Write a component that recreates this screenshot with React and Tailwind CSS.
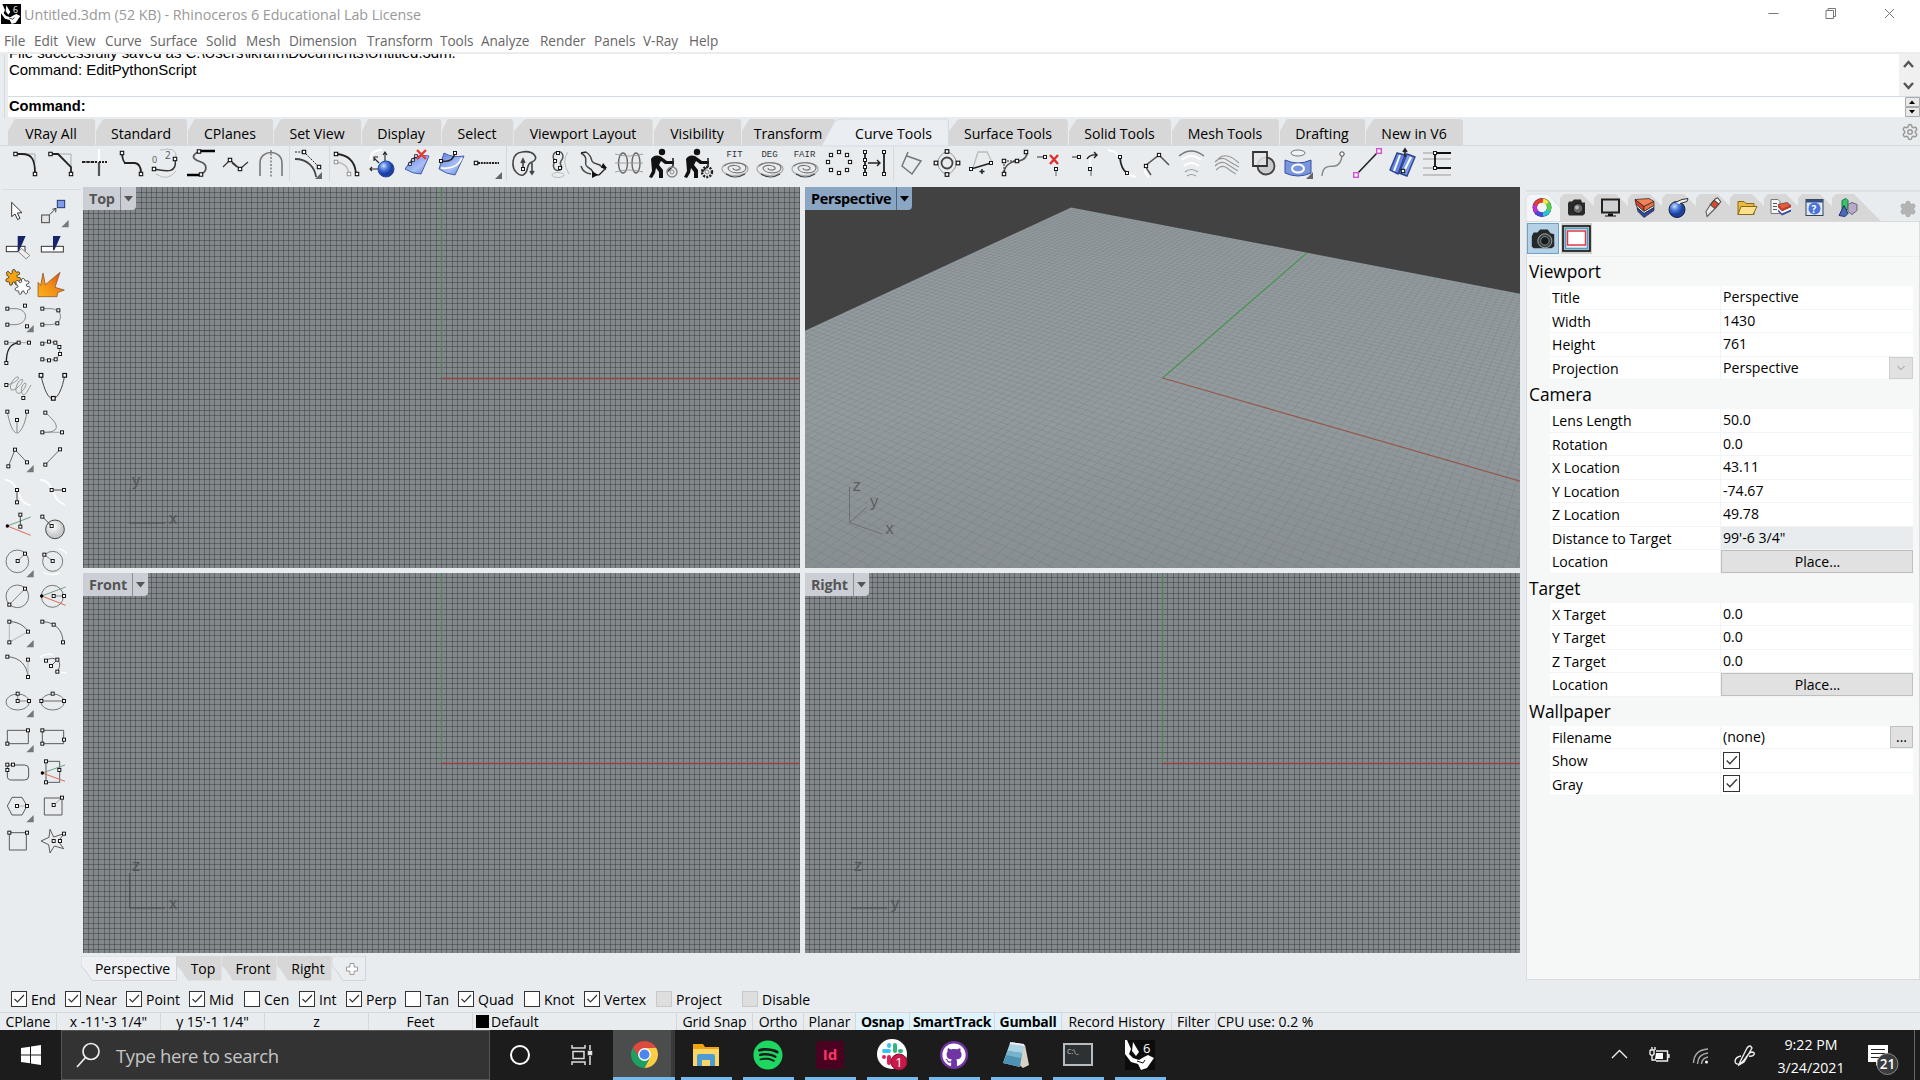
import React from "react";
import { FaSpotify, FaGithub } from "react-icons/fa";
import { Settings } from "lucide-react";

const FONT = "font-['Open_Sans','Noto_Sans',sans-serif]";

/* ---------- small drawing helpers ---------- */
const Sq = ({ p, s = 3.4, c = "#111" }) =>
  p.map(([x, y], i) => (
    <rect key={i} x={x - s / 2} y={y - s / 2} width={s} height={s} fill="#fff" stroke={c} strokeWidth={s * 0.32} />
  ));
const L = ({ d, c = "#222", w = 1.4, f = "none", dash }) => (
  <path d={d} stroke={c} strokeWidth={w} fill={f} strokeDasharray={dash} />
);
const Fly = () => <path d="M79 100H101V78Z" fill="#777" />;
const Fly2 = () => <path d="M25 33H32V26Z" fill="#666" />;
const Q = (props) => <Sq s={9} {...props} />;
const G = (props) => <L c="#777" w={2.6} {...props} />;

const Axes = ({ x = 22, y = 51, g = "92 24", r = "92 79" }) => (
  <>
    <L d={`M${x} ${y}L${g}`} c="#6fa083" w={3} />
    <L d={`M${x} ${y}L${r}`} c="#dc6a56" w={3} />
    <circle cx={x} cy={y} r="5" />
  </>
);

const Puzzle = ({ x, y, f }) => (
  <g transform={`translate(${x} ${y}) rotate(-12)`} stroke="#333" strokeWidth="2.6" fill={f}>
    <path d="M-15-13C-21-19-9-25-7-15C-5-11 0-11 1-15C0-25 12-25 11-16C12-13 15-12 16-13C24-14 24-3 17-4C12-5 11 0 14 4C24 3 25 14 16 14C13 14 11 16 12 19C12 26 2 26 2 19C3 13-3 12-5 16C-6 25-17 23-14 15C-13 12-14 10-17 10C-25 10-25 0-17 0C-12 0-11-5-15-8C-18-9-18-12-15-13Z" />
  </g>
);

const LEFT = [
  <path d="M35 25V68L45 60 53 77 60 73 52 57 66 56Z" fill="#fff" stroke="#333" strokeWidth="3" />,
  <><rect x="20" y="63" width="23" height="23" fill="#e4e4e0" stroke="#444" strokeWidth="3" /><rect x="67" y="19" width="22" height="22" fill="#7f9bee" stroke="#27386b" strokeWidth="3" /><L d="M44 62L62 44M52 46L63 43 62 55" w={2.5} /><Fly /></>,
  <><rect x="19" y="52" width="56" height="16" fill="#fff" stroke="#333" strokeWidth="3" /><path d="M64 58L89 79 79 90 55 68Z" fill="#eee" stroke="#888" strokeWidth="3" /><path d="M53 21H77L58 64 53 69Z" fill="#17246b" /></>,
  <><rect x="19" y="52" width="66" height="17" fill="#fff" stroke="#333" strokeWidth="3" /><path d="M54 21H77L58 64 54 64Z" fill="#17246b" /></>,
  <><Puzzle x={39} y={40} f="#f7a20f" /><Puzzle x={67} y={67} f="#fff" /></>,
  <path d="M9 98V55L17 64 24 27 31 62 75 25 60 70 88 78 68 86 66 98Z" fill="url(#fire)" stroke="#7a4a1c" strokeWidth="2" />,
  <><G d="M22 29H48C86 31 86 73 48 77H22" /><Q p={[[22, 29], [22, 77], [75, 20], [81, 82]]} /><Fly /></>,
  <><G d="M22 29H48C86 31 86 73 48 77H22" /><Q p={[[22, 29], [70, 34], [67, 73], [22, 77]]} /></>,
  <><G d="M19 26H87" c="#999" /><L d="M19 87C19 50 28 30 56 26" w={4} /><Q p={[[19, 26], [56, 26], [87, 26], [19, 87]]} /></>,
  <><G d="M22 29L42 23 61 26 73 39 75 60 62 76 42 79 22 76" /><Q p={[[22, 29], [42, 23], [61, 26], [73, 39], [75, 60], [62, 76], [42, 79], [22, 76]]} /></>,
  <><G d="M19 48C40 45 60 30 55 24C45 20 25 50 33 62C45 70 75 35 67 31C55 30 40 65 52 72C62 80 85 45 76 42C66 42 58 72 70 77C78 80 88 55 93 48" c="#888" /><Q p={[[19, 48], [70, 87]]} /></>,
  <><L d="M18 19C28 65 40 89 54 89C68 89 82 60 89 19" w={3} c="#444" /><Sq s={11} p={[[18, 19], [89, 19], [55, 88]]} /></>,
  <><G d="M22 23C30 70 42 87 51 87C60 87 75 65 81 23M51 48V85" /><Q p={[[22, 23], [81, 23], [51, 48]]} /></>,
  <><G d="M22 85H81" c="#999" /><G d="M31 26C50 42 65 58 64 70C62 83 45 85 22 85" /><Q p={[[31, 26], [22, 85], [81, 85]]} /></>,
  <><G d="M25 82L45 32 81 70" c="#555" /><Q p={[[25, 82], [45, 32], [81, 70]]} /><Fly /></>,
  <><G d="M75 31L31 77" c="#555" /><Q p={[[75, 31], [31, 77]]} /></>,
  <><L d="M14 17C62 22 45 85 92 94" c="#fff" w={5} /><G d="M51 48V85" c="#333" /><Q p={[[51, 48], [51, 85]]} /></>,
  <><L d="M16 17C62 22 45 80 90 92" c="#fff" w={5} /><G d="M50 48H87" c="#333" /><Q p={[[50, 48], [87, 48]]} /></>,
  <><Axes /><G d="M61 17V53" c="#333" /><Q p={[[61, 17], [61, 53]]} /></>,
  <><circle cx="60" cy="61" r="28" fill="url(#ball)" stroke="#444" strokeWidth="3" /><G d="M22 23L50 51" c="#333" /><Q p={[[22, 23], [50, 51]]} /></>,
  <><circle cx="52" cy="52" r="34" fill="none" stroke="#777" strokeWidth="3" /><G d="M53 51L75 29" /><Q p={[[53, 51], [75, 29]]} /><Fly /></>,
  <><L d="M25 85Q50 98 75 86M72 14Q90 20 95 30" c="#fff" w={4} /><circle cx="53" cy="52" r="30" fill="none" stroke="#777" strokeWidth="3" /><G d="M53 51L28 32" /><Q p={[[53, 51], [28, 32]]} /></>,
  <><circle cx="52" cy="52" r="34" fill="none" stroke="#777" strokeWidth="3" /><G d="M28 77L75 29" /><Q p={[[28, 77], [75, 29]]} /></>,
  <><circle cx="52" cy="52" r="33" fill="none" stroke="#777" strokeWidth="3" /><Axes x={20} /><G d="M56 51H87" /><Q p={[[56, 51], [87, 51]]} /></>,
  <><G d="M28 23V85L84 53" c="#aaa" /><G d="M28 23C50 22 75 35 84 53" c="#444" /><Q p={[[28, 23], [28, 85], [84, 53]]} /><Fly /></>,
  <><G d="M22 23C62 24 84 50 84 85" c="#555" /><Q p={[[22, 23], [56, 32], [84, 85]]} /></>,
  <><G d="M22 23C60 25 82 50 84 84" c="#555" /><G d="M84 32V84" c="#aaa" /><Q p={[[22, 23], [84, 32], [84, 84]]} /></>,
  <><L d="M15 25Q35 10 55 18M78 70Q95 70 92 75" c="#fff" w={4} /><G d="M33 35C50 20 90 30 67 68M48 51L67 32" c="#444" /><Q p={[[33, 35], [67, 32], [48, 51], [67, 68]]} /></>,
  <><ellipse cx="53" cy="54" rx="35" ry="24" fill="none" stroke="#777" strokeWidth="3" /><G d="M53 29V51H87" /><Q p={[[53, 29], [53, 51], [87, 51]]} /><Fly /></>,
  <><ellipse cx="53" cy="54" rx="35" ry="24" fill="none" stroke="#777" strokeWidth="3" /><G d="M19 51H87" c="#555" /><Q p={[[53, 29], [19, 51], [87, 51]]} /></>,
  <><G d="M22 34H85V74H22Z" c="#444" /><Q p={[[84, 34], [22, 74]]} /><Fly /></>,
  <><G d="M22 34H86V74H22Z" c="#444" /><Q p={[[22, 34], [22, 74], [87, 62]]} /></>,
  <><rect x="22" y="33" width="64" height="45" rx="12" fill="none" stroke="#555" strokeWidth="3" /><Q p={[[22, 32], [39, 32], [22, 48]]} /></>,
  <><G d="M33 22H74V85H33Z" c="#444" /><Axes y={57} g="90 33" r="90 82" /><Q p={[[33, 22], [73, 48], [33, 85]]} /></>,
  <><G d="M22 51L36 25H66L81 51 66 78H36Z" c="#444" /><G d="M51 51H81" c="#aaa" /><Q p={[[51, 51], [81, 51]]} /><Fly /></>,
  <><G d="M28 27H81V78H28Z" c="#444" /><G d="M56 48L81 26" c="#999" /><Q p={[[81, 26], [56, 48]]} /></>,
  <><G d="M28 26H79V78H28Z" c="#444" /><Q p={[[28, 26], [81, 26]]} /></>,
  <><G d="M45 16L56 39 87 29 70 52 86 74 58 66 45 87 41 62 18 51 42 40Z" c="#444" /><Q p={[[87, 29], [56, 51], [75, 51]]} /></>,
];

const Spiral = ({ t }) => (
  <>
    <text x="17.5" y="11" fontSize="9" textAnchor="middle" fill="#333" className="font-['Liberation_Mono',monospace]">{t}</text>
    <g fill="none" stroke="#777" strokeWidth="1.2">
      <ellipse cx="18" cy="23" rx="13" ry="6.5" stroke="#aaa" />
      <path d="M7 20C13 15 29 16 29 22C28 29 12 28 11 22C13 18 24 19 23 23C20 25 16 24 16 22" />
      <path d="M9 28Q18 34 28 28" stroke="#444" />
    </g>
  </>
);
const Digger = ({ k }) => (
  <>
    <circle cx="15" cy="6" r="3.2" fill="#111" />
    <path d="M4 13Q7 8 13 10L20 15 27 15 27 18 18 18 14 15 12 19 16 24 16 32H12L12 26 9 22 8 27 5 32 2 31 5 25Z" fill="#111" />
    <L d="M26 12V20L20 26" w={1.6} />
    <circle cx="25" cy="26" r="5" fill="none" stroke={k ? "#222" : "#888"} strokeWidth={k ? 2.4 : 1.5} strokeDasharray={k ? "2 1.2" : undefined} />
    <circle cx="25" cy="26" r="2" fill="none" stroke="#888" />
  </>
);

const TOP_ICONS = [
  <><L d="M14 8H27V16" c="#aaa" w={1} /><L d="M8 8H14C24 8 27 14 27 27" w={1.8} /><Sq p={[[7.5, 8], [27, 28]]} /></>,
  <><L d="M14 8H28V20" c="#aaa" w={1} /><L d="M7 8H15L28 21V27" w={1.8} /><Sq p={[[7.5, 8], [28, 28]]} /></>,
  <><L d="M21 3V15" c="#fff" w={2} /><L d="M21 16V30" w={2.2} c="#555" /><L d="M4 16H19" w={1.8} dash="3.5 .8" /><L d="M21 16H30" w={1.8} dash="2 1" /></>,
  <><L d="M13 17Q10 17 9 8M11 17H22Q28 18 28 27" w={1.8} /><Sq p={[[9, 7], [28, 28]]} /></>,
  <><path d="M12 4Q30 0 28 12M8 28Q20 36 28 25" stroke="#bbb" fill="none" /><L d="M6 23C14 24 30 30 27 13" c="#333" /><text x="4" y="17" fontSize="9" fill="#555">0</text><text x="17" y="13" fontSize="10" fill="#555">2</text><Sq p={[[6, 23], [27, 13]]} /></>,
  <><L d="M17 5H32M4 29H17" w={2.6} c="#000" /><L d="M15 6C5 11 14 15 18 16C24 18 25 25 18 28" c="#555" w={1.8} /><Sq p={[[16, 5.5], [18, 28.5]]} /></>,
  <><L d="M5 21L12 14 22 23 30 16M14 17L19 21" c="#333" w={1.2} /><Sq p={[[12, 14], [22, 23]]} /></>,
  <><L d="M7 30V17C7 3 29 3 29 17V30" c="#777" w={1.6} /><L d="M18 4V31" w={1} dash="2 1.5" c="#444" /></>,
  <><L d="M5 6H14M16 8L28 20" w={1} dash="2 1.2" /><L d="M5 13C18 13 25 22 26 31" w={1.8} c="#444" /><Sq p={[[14, 6], [29, 21]]} /><Fly2 /></>,
  <><L d="M6 16Q17 17 19 27" c="#bbb" /><L d="M6 8Q24 9 26 27" w={1.8} /><Sq p={[[6, 16], [19, 28]]} c="#999" /><Sq p={[[6, 8], [27, 28]]} /></>,
  <><L d="M5 14Q6 4 17 4" c="#fff" w={2} /><L d="M20 17V7M14 17L9 12M13 23H5M18 9L20 6 22 9M9 15V11H13M7 21L5 23 7 25" w={1.1} /><circle cx="21" cy="23" r="8" fill="url(#blue)" stroke="#234b9f" /></>,
  <><path d="M12 13Q19 8 29 10L21 28Q13 28 5 23Z" fill="url(#blueq)" stroke="#4560a8" /><L d="M9 19L17 9" w={1.4} /><Sq p={[[10, 18], [13, 14], [16, 10]]} s={2.6} /><L d="M17 4L26 13M26 4L17 13" c="#e33a34" w={2.4} /></>,
  <><path d="M9 7Q17 12 29 10L20 29Q11 28 4 23Z" fill="url(#blueq)" stroke="#4560a8" /><L d="M6 22Q22 24 27 12" c="#fff" w={1.8} /><L d="M6 15Q18 17 20 7" /><Sq p={[[6, 15], [20, 7]]} s={3} /></>,
  <><L d="M8 17H29" w={1.8} dash="2 .8" /><Sq p={[[6, 17]]} /><Fly2 /></>,
  <><L d="M10 27C4 22 4 7 15 6C27 4 33 13 25 16C18 18 23 26 16 29Q13 30 10 27ZM16 24V14M14 17L16 13 18 17M25 17V28M23 25L25 28 27 25" c="#444" w={1.6} /><Sq p={[[16, 23]]} s={3} /></>,
  <><path d="M16 6C10 6 10 13 14 15C9 19 12 26 18 24C23 21 16 19 19 15C23 10 20 5 16 6Z" fill="none" stroke="#555" strokeWidth="1.5" /><ellipse cx="16" cy="29" rx="6" ry="2.5" fill="none" stroke="#bbb" /><path d="M26 6Q19 15 27 28" fill="none" stroke="#bbb" /><Sq p={[[16, 7], [13, 15], [18, 22]]} s={3} /></>,
  <><L d="M4 7C14 13 4 18 12 22 18 25 14 29 22 29M9 6C18 12 11 16 20 18 26 19 24 23 29 23M4 20Q6 27 14 28" w={1.5} c="#444" /><L d="M4 7L9 6M22 29L29 22" /><path d="M15 25l6 4-6 3zM26 17l4 5h-6z" fill="#111" /></>,
  <><ellipse cx="11" cy="17" rx="4.5" ry="10" fill="none" stroke="#666" strokeWidth="1.4" /><ellipse cx="24" cy="17" rx="4" ry="10" fill="none" stroke="#666" strokeWidth="1.4" /><L d="M3 8Q17 12 31 8M3 26Q17 22 31 26M3 17H31" c="#999" w={0.9} /></>,
  <Digger />,
  <Digger k />,
  <Spiral t="FIT" />,
  <Spiral t="DEG" />,
  <Spiral t="FAIR" />,
  <Sq p={[[17, 6], [25, 9], [28, 16], [25, 24], [17, 27], [9, 24], [6, 16], [9, 9]]} s={3.2} />,
  <><L d="M8 6V29M27 6V29" w={1.8} /><L d="M11 17H23M20 14L23 17 20 20" w={1.4} /><Sq p={[[8, 6], [8, 14], [8, 21], [8, 28], [27, 6], [27, 28]]} s={3} /></>,
  <><L d="M14 6L8 20 18 28 27 15 13 10" c="#777" w={1.5} /></>,
  <><path d="M18 5Q24 8 26 12 29 17 26 22 23 27 18 29 13 27 10 22 7 17 10 12 13 7 18 5Z" fill="none" stroke="#999" /><circle cx="18" cy="17" r="5.5" fill="none" stroke="#444" strokeWidth="1.8" /><Sq p={[[18, 5.5], [18, 28.5], [7, 17], [29, 17]]} s={3.6} /></>,
  <><L d="M9 22L14 6H23L28 16" c="#bbb" w={1.3} /><L d="M7 23L27 17M18 23V28M15.500 25.500H20.500" w={1.5} /><Sq p={[[7, 23], [27, 17]]} s={3} /></>,
  <><L d="M5 28C5 20 11 15 20 15Q28 13 28 7" c="#555" w={1.6} /><L d="M5 15H18M5 15V28" dash="2 1" w={1} /><Sq p={[[5, 15], [5, 28], [18, 15], [27, 6]]} /></>,
  <><L d="M3 11H10" c="#666" /><Sq p={[[11, 11]]} s={3} /><L d="M16 9L24 18M24 9L16 18" c="#e0302c" w={2.4} /><L d="M22 24V30" c="#888" /><Sq p={[[22, 23]]} s={3} /></>,
  <><L d="M3 11H10" c="#666" /><L d="M18 13Q21 8 27 9M25 6L28 9 25 12" w={1.4} /><L d="M21 12V21" c="#fff" /><L d="M22 24V30" c="#888" /><Sq p={[[10, 11], [21, 23]]} s={3} /></>,
  <><L d="M4 4Q14 6 13 10M23 28L32 31" c="#fff" w={2} /><L d="M16 12Q17 23 23 27" w={1.8} /><Sq p={[[16, 11], [23, 27]]} s={3} /></>,
  <><L d="M12 29L6 20 20 9 30 19" w={1.5} c="#555" /><path d="M6 22Q5 27 10 31" stroke="#fff" fill="none" strokeWidth="2" /><Sq p={[[7, 20], [20, 9]]} s={3.2} /></>,
  <><path d="M5 10Q17 0 30 10" stroke="#777" fill="none" strokeWidth="1.5" /><path d="M8 14Q17 6 27 14M10 20Q17 14 25 20" stroke="#fff" fill="none" strokeWidth="2" /><path d="M11 26Q17 21 24 26M13 30Q17 27 22 30" stroke="#999" fill="none" strokeWidth="1.2" /></>,
  <><path d="M6 16Q12 10 18 14T30 21M6 20Q12 14 18 18T29 25M7 24Q13 18 18 22T27 28M9 13Q17 5 30 17" stroke="#999" fill="none" strokeWidth="1.1" /></>,
  <><circle cx="22" cy="20" r="8.500" fill="#c9cbcd" stroke="#444" strokeWidth="1.800" /><path d="M9 6H23V20H9Z" fill="#e4e6e8" fillOpacity=".85" stroke="#333" strokeWidth="1.800" /></>,
  <><ellipse cx="19" cy="7" rx="7" ry="3" fill="#f0f2f4" stroke="#777" /><path d="M6 14Q19 20 32 14V27Q19 33 6 27Z" fill="#7895df" stroke="#3551a0" /><ellipse cx="19" cy="22.500" rx="6" ry="4" fill="none" stroke="#fff" strokeWidth="2" /><path d="M27 33H34V26Z" fill="#666" /></>,
  <><L d="M8 30C9 18 16 21 21 20C26 19 28 13 28 9" c="#888" w={1.4} /><circle cx="28" cy="8" r="2.2" fill="#fff" stroke="#444" /></>,
  <><L d="M8 28L28 7" w={1.6} /><Sq p={[[7, 29], [30, 5]]} s={4.6} c="#d450d4" /></>,
  <><path d="M13 7L21 9 14 28 6 24Z" fill="#6485dd" stroke="#2b4490" strokeWidth="1.4" /><path d="M23 8L31 11 23 30 15 27Z" fill="#7b99e8" stroke="#2b4490" strokeWidth="1.4" /><L d="M16 9L10 25M27 11L19 27" c="#fff" w={2} /><Sq p={[[19, 25]]} /><L d="M21 3V11M19 6L21 3 23 6" w={1.6} /></>,
  <><L d="M4 7H32M4 13H32M4 22H32M4 29H32" c="#999" w={1.2} /><L d="M16 7H32M16 7V22M16 22H32" c="#111" w={1.8} /><Sq p={[[16, 7], [16, 22]]} s={3} /></>,
];

const TABS = [
  ["VRay All", "w-[88px]"], ["Standard", "w-[92px]"], ["CPlanes", "w-[86px]"], ["Set View", "w-[88px]"],
  ["Display", "w-[80px]"], ["Select", "w-[72px]"], ["Viewport Layout", "w-[140px]"], ["Visibility", "w-[88px]"],
  ["Transform", "w-[94px]"], ["Curve Tools", "w-[113px]"], ["Surface Tools", "w-[120px]"], ["Solid Tools", "w-[103px]"],
  ["Mesh Tools", "w-[108px]"], ["Drafting", "w-[86px]"], ["New in V6", "w-[98px]"],
];

const MENU = [
  ["File", "w-[30px]"], ["Edit", "w-[32px]"], ["View", "w-[39px]"], ["Curve", "w-[45px]"], ["Surface", "w-[56px]"],
  ["Solid", "w-[40px]"], ["Mesh", "w-[43px]"], ["Dimension", "w-[78px]"], ["Transform", "w-[73px]"], ["Tools", "w-[41px]"],
  ["Analyze", "w-[59px]"], ["Render", "w-[54px]"], ["Panels", "w-[49px]"], ["V-Ray", "w-[46px]"], ["Help", "w-[40px]"],
];

function TitleBar() {
  return (
    <div className="flex h-[28px] shrink-0 items-center bg-white">
      <div className="ml-px h-5 w-5 bg-black"><Rhino /></div>
      <span className="ml-[3px] grow pt-[2px] text-[14.3px] tracking-[-0.03px] whitespace-nowrap text-[#999]">Untitled.3dm (52 KB) - Rhinoceros 6 Educational Lab License</span>
      <svg className="h-7 w-[160px]" viewBox="0 0 160 28" fill="none" stroke="#777">
        <path d="M8.500 13.500H18.500M66 10.500H73.500V18.500H66ZM68 10V8.500H75.500V16.500H74M125 9L134 18M134 9L125 18" />
      </svg>
    </div>
  );
}

function Rhino({ big }) {
  return (
    <svg viewBox="0 0 30 30" className={big ? "h-[30px] w-[30px]" : "h-5 w-5"}>
      <path d="M2 0L6 9 4 14 8 18 14 20 19 17 23 15 29 18 22 28 16 30 13 24 6 22 0 14V0ZM8 2L14 12 11 16 7 11Z" fill="#fff" />
      <path d="M12 21L18 23 20 20" fill="none" stroke="#111" />
      <text x="18" y="13" fontSize="13" fill="#fff">6</text>
    </svg>
  );
}

function CommandArea() {
  return (
    <div className="flex h-[66px] shrink-0 border-t-2 border-[#ebecee] bg-[#e8ecef] font-['Liberation_Sans',sans-serif] text-[15px] text-black">
      <div className="ml-1 flex grow flex-col border-l border-[#d5d9dd] pl-[3px]">
        <div className="flex h-[43px] border-b border-[#d3dbe3]">
          <div className="flex grow flex-col justify-end overflow-hidden bg-white pb-[18px] pl-px leading-[17px] tracking-[-0.04px] whitespace-nowrap">
            <div>File successfully saved as C:\Users\ikram\Documents\Untitled.3dm.</div>
            <div>Command: EditPythonScript</div>
          </div>
          <svg className="h-[42px] w-[21px] bg-[#f0f0f0]" viewBox="0 0 21 42" fill="none" stroke="#555" strokeWidth="2.4"><path d="M5 13L9.500 8 14 13M5 29L9.500 34 14 29" /></svg>
        </div>
        <div className="flex h-[20px] items-center bg-white pl-px font-bold">
          <span className="grow pb-[2px] text-[14.7px] leading-[18px]">Command:</span>
          <svg className="h-5 w-[15px]" viewBox="0 0 15 20"><path d="M.5.5H14.500V9.500H.5ZM.5 10.500H14.500V19.500H.5Z" fill="#e9e9e9" stroke="#aaa" /><path d="M4 7H10L7 3.500ZM4 13H10L7 16.500Z" /></svg>
        </div>
      </div>
    </div>
  );
}

function Tabs() {
  return (
    <div className="flex h-[28px] shrink-0 items-end border-b border-[#d3d9e0] pl-2">
      {TABS.map(([t, w]) => {
        const on = t === "Curve Tools";
        return (
          <div key={t} className={`${w} relative flex h-[26px] items-center justify-center text-[14.1px] whitespace-nowrap text-black`}>
            <svg className="absolute inset-0 h-full w-full overflow-visible" viewBox="0 0 100 26" preserveAspectRatio="none">
              <path d={on ? "M-13 27L-2 4Q0 0 5 0H97Q99.500 0 99.500 3V27Z" : "M0 26V12L7 1Q8 0 10 0H96Q99 0 99 3V26Z"} fill={on ? "#eaedf1" : "#d7d7d7"} stroke={on ? "#d6dce3" : "none"} />
            </svg>
            <span className={`pt-[4px] ${on ? "pl-[2px]" : "pr-[2px]"} relative`}>{t}</span>
          </div>
        );
      })}
      <div className="grow" />
      <Settings className="mr-[1px] mb-1 h-[18px] w-[18px] text-[#999]" strokeWidth={2} />
    </div>
  );
}

const SEP = { 8: "ml-[2px]", 9: "ml-[5px]", 14: "ml-[2px]", 25: "ml-[2px]" };
function IconBar() {
  return (
    <div className="flex h-[41px] shrink-0 pl-2">
      {TOP_ICONS.map((ic, i) => (
        <div key={i} className={`${SEP[i] ? SEP[i] + " shadow-[-1px_0_0_#d4d8dc]" : ""} h-[35px] w-[35px] shrink-0`}>
          <svg viewBox="0 0 35 35" className="h-[35px] w-[35px] overflow-visible">{ic}</svg>
        </div>
      ))}
    </div>
  );
}

/* Orthographic construction-plane grid */
function OrthoGrid({ w, h, cx, cy, a, b, up }) {
  const n = 5.27, v = [], hz = [];
  for (let i = -70; i <= 70; i++) {
    const x = Math.round(cx + i * n), y = Math.round(cy + i * n * 1.01);
    if (x >= 0 && x <= w) v.push(`M${x + 0.5} 0V${h}`);
    if (y >= 0 && y <= h) hz.push(`M0 ${y + 0.5}H${w}`);
  }
  const oy = h - 46;
  return (
    <svg className="block h-full w-full" viewBox={`0 0 ${w} ${h}`} preserveAspectRatio="none">
      <rect width={w} height={h} fill="#82888b" />
      <g stroke="#202628" strokeOpacity=".36" shapeRendering="crispEdges"><path d={v.join("")} /><path d={hz.join("")} /></g>
      <path d={`M${cx + 0.5} 0V${cy}`} stroke="#4c8550" strokeWidth="1.200" />
      <path d={`M${cx} ${cy + 0.5}H${w}`} stroke="#914542" strokeWidth="1.500" />
      <path d={`M46.500 ${oy - 34}V${oy + 1}`} stroke="#4f5356" strokeOpacity={up ? 0.9 : 0.3} fill="none" />
      <path d={`M46 ${oy + 1}H82`} stroke="#484c4e" strokeWidth="1.200" fill="none" />
      <g fill="#505456" fontSize="16.500" className="font-['Liberation_Sans',sans-serif]"><text x="49" y={oy - 36}>{a}</text><text x="86" y={oy + 2}>{b}</text></g>
    </svg>
  );
}

/* Perspective camera at (43.11, -74.67, 49.78) looking at the origin */
function proj(x, y) {
  const d = 99.56 - 0.433 * x + 0.75 * y;
  return `${(357.5 + (793 * (0.866 * x + 0.5 * y)) / d).toFixed(1)} ${(191 - (793 * (-0.25 * x + 0.433 * y)) / d).toFixed(1)}`;
}
function PerspGrid() {
  const a = [];
  for (let i = -50; i <= 50; i++) {
    a.push(`M${proj(i, -50)}L${proj(i, 50)}M${proj(-50, i)}L${proj(50, i)}`);
  }
  return (
    <svg className="block h-full w-full" viewBox="0 0 715 381" preserveAspectRatio="none">
      <defs>
        <linearGradient id="pl" x1="0" y1="0" x2="0" y2="381" gradientUnits="userSpaceOnUse"><stop offset="0" stopColor="#949c9f" /><stop offset=".6" stopColor="#929a9d" /><stop offset="1" stopColor="#888f92" /></linearGradient>
      </defs>
      <rect width="715" height="381" fill="#424242" />
      <path d={`M${proj(-50, 50)}L${proj(50, 50)}L${proj(50, -50)}L${proj(-50, -50)}Z`} fill="url(#pl)" />
      <path d={a.join("")} stroke="#4a5154" strokeOpacity=".16" fill="none" strokeWidth=".8" />
      <path d={`M${proj(0, 0)}L${proj(0, 50)}`} stroke="#4a9450" strokeWidth="1.200" />
      <path d={`M${proj(0, 0)}L${proj(50, 0)}`} stroke="#95594c" strokeWidth="1.200" />
      <path d="M44.500 300V335.500L62 320M44.500 335.500L77 347" stroke="#6a7073" fill="none" />
      <g fill="#5a5f61" fontSize="16.500" className="font-['Liberation_Sans',sans-serif]"><text x="47.500" y="304">z</text><text x="65" y="320">y</text><text x="80.500" y="347">x</text></g>
    </svg>
  );
}

function Viewport({ title, active, children }) {
  return (
    <div className="relative min-h-0 min-w-0 overflow-hidden">
      {children}
      <div className={`absolute top-0 left-0 flex h-[23px] items-center rounded-br text-[14.4px] font-bold ${active ? "bg-[#8ba6c3] tracking-[-0.3px] text-black" : "bg-[#cbcfd5] tracking-[-0.2px] text-[#555]"}`}>
        <span className="pr-[5px] pl-[6px] leading-[23px]">{title}</span>
        <span className={`flex h-full items-center border-l px-[3px] ${active ? "border-[#4d647e]" : "border-[#8b8f94]"}`}>
          <svg className="h-2 w-[9px]" viewBox="0 0 9 8"><path d="M0 1H9L4.500 6.500Z" fill="currentColor" /></svg>
        </span>
      </div>
    </div>
  );
}

/* ---------- properties panel ---------- */
const Check = ({ on = true, dim, small }) => (
  <span className={`${small ? "h-[17px] w-[17px]" : "h-4 w-4"} box-border block shrink-0 border ${dim ? "border-[#c9c9c9] bg-[#dedede]" : "border-[#333] bg-white"}`}>
    {on && <svg viewBox="0 0 14 14" className="h-full w-full" fill="none" stroke="#333" strokeWidth="1.2"><path d="M2.500 7L5.500 10 12 3" /></svg>}
  </span>
);

const PTABS = [
  <g fill="none" strokeWidth="4"><circle cx="17" cy="15" r="9.500" fill="#333" stroke="none" /><circle cx="17" cy="15" r="5" fill="#f3f5f6" stroke="none" /><path d="M17 8A7 7 0 0 1 23 11.500" stroke="#f6e93c" /><path d="M22.500 10.500A7 7 0 0 1 23 19" stroke="#4fd64a" /><path d="M23.500 18A7 7 0 0 1 17 22" stroke="#27c5dd" /><path d="M18 22A7 7 0 0 1 11 18.500" stroke="#4b45e0" /><path d="M11.500 19.500A7 7 0 0 1 11 11.500" stroke="#c12fd0" /><path d="M10.500 12.500A7 7 0 0 1 18 8" stroke="#e93a35" /></g>,
  <g><path d="M9 11L10 9H13L15 7H22L23 10H26V21L24 23H10L9 21Z" fill="#2b2b2b" /><circle cx="19" cy="16" r="5" fill="#666" stroke="#111" /><circle cx="18" cy="15" r="2" fill="#b9b9b9" /></g>,
  <g><rect x="9" y="7" width="17" height="13" fill="#cfd2d3" stroke="#222" strokeWidth="2" /><path d="M15 21H20V23H23V24H12V23H15Z" fill="#111" /></g>,
  <g stroke="#222" strokeWidth=".7"><path d="M8 7L22 6 27 9 17 14Z" fill="#f08458" /><path d="M8 7L17 14V19L9 12Z" fill="#d8432c" /><path d="M17 14L27 9V13L17 19Z" fill="#ef6f45" /><path d="M9 12L17 19 27 13V15L17 21 10 15Z" fill="#fff" /><path d="M10 15L17 21 27 15V18L17 25 11 19Z" fill="#2e4aa0" /></g>,
  <g><circle cx="16" cy="17" r="8" fill="url(#blue)" stroke="#123" /><path d="M14 10L21 7 27 6 26 9 19 11 23 13" fill="#eee" stroke="#333" /></g>,
  <g transform="rotate(40 17 15)"><path d="M15 4L20 5V13H14V6Z" fill="#f6f2ef" stroke="#444" /><path d="M14 8H20V14H14Z" fill="#e2492c" stroke="#444" /><path d="M14 14H20L19 25 15 22Z" fill="#e9e9e9" stroke="#555" /></g>,
  <g stroke="#8a6710"><path d="M9 9H15L17 11H25V22H9Z" fill="#e9bb42" /><path d="M12 14H28L24 22H9Z" fill="#fbe08e" /></g>,
  <g><path d="M8 7H15L17 9V21H8Z" fill="#f5f5f5" stroke="#777" /><path d="M10 11H14M10 14H14M10 17H14" stroke="#555" /><path d="M15 12L24 10 28 13 19 17Z" fill="#e9593b" stroke="#333" strokeWidth=".6" /><path d="M15 12L19 17 28 13V15L19 19 15 15Z" fill="#c33724" /><path d="M15 15L19 19 28 15V17L19 21 15 17Z" fill="#fff" /><path d="M15 17L19 21 28 17V19L19 23 15 19Z" fill="#35499d" /></g>,
  <g><rect x="9" y="7" width="17" height="16" fill="#dfe6f4" stroke="#345" /><rect x="9" y="7" width="17" height="3" fill="#35507f" /><circle cx="17.500" cy="16" r="6" fill="#4a72d8" /><text x="14.500" y="20" fontSize="10" fontWeight="bold" fill="#fff">?</text></g>,
  <g><path d="M11 8L15 6 17 8V17H11Z" fill="#3dc362" stroke="#175" /><path d="M8 23L13 13 17 21 14 24Z" fill="#496bb8" stroke="#236" /><path d="M17 12L21 10 26 12V18L21 22 17 19Z" fill="#b8a8ca" stroke="#667" /></g>,
];

const SECTIONS = [
  ["Viewport", [["Title", "Perspective"], ["Width", "1430"], ["Height", "761"], ["Projection", "Perspective", "select"]]],
  ["Camera", [["Lens Length", "50.0"], ["Rotation", "0.0"], ["X Location", "43.11"], ["Y Location", "-74.67"], ["Z Location", "49.78"], ["Distance to Target", "99'-6 3/4\"", "ro"], ["Location", "Place...", "btn"]]],
  ["Target", [["X Target", "0.0"], ["Y Target", "0.0"], ["Z Target", "0.0"], ["Location", "Place...", "btn"]]],
  ["Wallpaper", [["Filename", "(none)", "file"], ["Show", "", "check"], ["Gray", "", "check"]]],
];

function Row({ r: [k, v, t] }) {
  return (
    <div className="mr-[6px] ml-[23px] flex h-[23.5px] shrink-0 border-b border-[#f1f3f4] bg-white text-[14.1px] leading-[24px]">
      <div className="w-[171px] shrink-0 border-r border-[#f1f3f4] pl-[2px]">{k}</div>
      {t === "btn" ? (
        <div className="grow border border-[#bfbfbf] bg-[#e1e1e1] pl-px text-center leading-[22px]">{v}</div>
      ) : (
        <div className={`flex grow items-center pl-[2px] ${t === "ro" ? "bg-[#e8ecef]" : ""}`}>
          {t === "check" ? <Check small /> : <span className="grow">{v}</span>}
          {t === "select" && <svg className="h-full w-6 border border-[#cfcfcf] bg-[#e1e1e1]" viewBox="0 0 24 23" fill="none" stroke="#888"><path d="M8 9L12 13 16 9" /></svg>}
          {t === "file" && <span className="flex h-full w-[23px] items-center justify-center border border-[#bfbfbf] bg-[#e1e1e1]">...</span>}
        </div>
      )}
    </div>
  );
}

function Panel() {
  return (
    <div className="mt-[3px] mb-0 ml-[6px] flex h-[790px] grow flex-col border-t-2 border-[#dde1e5]">
      <div className="flex h-[29px] shrink-0 items-end">
        {PTABS.map((ic, i) => (
          <div key={i} className="h-[27px] w-[34px] shrink-0">
            <svg viewBox="0 0 34 27" className="h-[27px] w-[34px] overflow-visible">
              <path d="M0 27V4L4 0H22L49 27Z" fill={i ? "#d7d7d7" : "#e8ecef"} />
              {i === 0 && <path d="M0 27V4L4 0H22L46 27" fill="#f3f5f6" stroke="#dde1e5" />}
            </svg>
          </div>
        ))}
        <div className="grow" />
        <Settings className="mr-[3px] mb-[3px] h-[18px] w-[18px] fill-[#b5b5b5] text-[#b0b0b0]" />
      </div>
      <div className="relative z-10 -mt-[27px] flex h-[27px] shrink-0">
        {PTABS.map((ic, i) => (
          <svg key={i} viewBox="0 0 34 27" className="h-[27px] w-[34px]"><g transform="translate(-1 -1.500)">{ic}</g></svg>
        ))}
      </div>
      <div className="flex grow flex-col border border-[#d8dce1] bg-[#f6f7f7] text-black">
        <div className="flex h-[35px] shrink-0 gap-[2px] border-b border-[#eceeef] pt-[1px]">
          <svg className="h-[31px] w-[32px] border border-[#6fa0c6] bg-[#b4d1e6]" viewBox="0 0 32 31"><path d="M4 13L6 9 10 9 13 6H21L24 10 28 11V24L25 26H6L4 24Z" fill="#23282a" /><circle cx="18" cy="18" r="7.500" fill="#3c4446" stroke="#aaa" /><circle cx="18" cy="18" r="4.500" fill="#151a1b" stroke="#7b8a8c" /></svg>
          <svg className="h-[31px] w-[31px] bg-[#d0d0d0]" viewBox="0 0 31 31"><rect x="2" y="3" width="27" height="25" fill="#b9c0c4" stroke="#111" strokeWidth="1.600" /><rect x="4.500" y="5.500" width="22" height="20" fill="#e8eef2" stroke="#4f9cc4" strokeWidth="1.500" /><rect x="6.500" y="8" width="18" height="14" fill="#fff" stroke="#dc3c47" strokeWidth="1.500" /></svg>
        </div>
        {SECTIONS.map(([h, rows]) => (
          <React.Fragment key={h}>
            <div className="h-[29px] shrink-0 pl-[2px] text-[17.3px] leading-[30px]">{h}</div>
            {rows.map((r, j) => <Row key={j} r={r} />)}
          </React.Fragment>
        ))}
      </div>
    </div>
  );
}

function ViewTabs() {
  const items = [["Perspective", "w-[96px]", "#eef0f3"], ["Top", "w-[45px]", "#d7d7d7"], ["Front", "w-[55px]", "#d7d7d7"], ["Right", "w-[55px]", "#d7d7d7"], ["", "w-[34px]", "#eaedf0"]];
  return (
    <div className="flex h-[25px] shrink-0 pl-[81px] text-[14px]">
      {items.map(([t, w, f], i) => (
        <div key={i} className={`${w} relative flex items-center justify-center ${t ? "pl-[7px]" : "pl-[5px]"} text-black`}>
          <svg className="absolute inset-0 h-full w-full" viewBox={`0 0 ${[96, 45, 55, 55, 34][i]} 25`}><path d={`M0 0H${[96, 45, 55, 55, 34][i] - 0.5}V24.500H11L4 14L0 10Z`} fill={f} stroke={i === 0 || i === 4 ? "#d0d5db" : "none"} /></svg>
          {t ? <span className="relative">{t}</span> : <svg className="relative h-3 w-3" viewBox="0 0 12 12"><path d="M4 .5H8V4H11.500V8H8V11.500H4V8H.5V4H4Z" fill="#fff" stroke="#999" /></svg>}
        </div>
      ))}
    </div>
  );
}

const OSNAP = [
  ["End", 1, "w-[54px]"], ["Near", 1, "w-[61px]"], ["Point", 1, "w-[63px]"], ["Mid", 1, "w-[55px]"], ["Cen", 0, "w-[55px]"], ["Int", 1, "w-[47px]"],
  ["Perp", 1, "w-[59px]"], ["Tan", 0, "w-[53px]"], ["Quad", 1, "w-[66px]"], ["Knot", 0, "w-[60px]"], ["Vertex", 1, "w-[72px]"], ["Project", 2, "w-[86px]"], ["Disable", 2, "w-[80px]"],
];

const STATUS = [
  ["CPlane", "w-[57px]"], ["x -11'-3 1/4\"", "w-[104px]"], ["y 15'-1 1/4\"", "w-[104px]"], ["z", "w-[104px]"], ["Feet", "w-[104px]"], ["Default", "w-[204px]"],
  ["Grid Snap", "w-[76px]"], ["Ortho", "w-[51px]"], ["Planar", "w-[52px]"], ["Osnap", "w-[54px]", 1], ["SmartTrack", "w-[85px]", 1], ["Gumball", "w-[67px]", 1],
  ["Record History", "w-[110px]"], ["Filter", "w-[44px]"],
];

/* ---------- taskbar ---------- */
const Chrome = () => (
  <svg viewBox="-15 -15 30 30" className="h-[29px] w-[29px]">
    <path d="M-12.100-7A14 14 0 0 1 12.100-7L0-6.500-5.600 3.200Z" fill="#dd4b3e" />
    <path d="M12.100-7A14 14 0 0 1 0 14L5.600 3.200 0-6.500Z" fill="#fdce44" />
    <path d="M0 14A14 14 0 0 1-12.100-7L-5.600 3.200 5.600 3.200Z" fill="#1da160" />
    <circle r="6.600" fill="#fff" /><circle r="5.200" fill="#4b87ee" />
  </svg>
);
const APPS = [
  <Chrome />,
  <svg viewBox="0 0 28 28" className="h-7 w-7"><path d="M1 3H11L13 6H27V25H1Z" fill="#f0a30e" /><path d="M1 8H27V25H1Z" fill="#fbd566" /><path d="M5 25V15Q5 13 7 13H21Q23 13 23 15V25H18V19H10V25Z" fill="#4c9cd2" /></svg>,
  <FaSpotify className="h-[30px] w-[30px] text-[#1ed760]" />,
  <div className="flex h-7 w-7 items-center justify-center rounded bg-[#49021f] text-[15px] font-bold text-[#fd3667]">Id</div>,
  <svg viewBox="0 0 32 32" className="h-8 w-8 overflow-visible"><circle cx="16" cy="15" r="15" fill="#fff" /><g strokeWidth="4" strokeLinecap="round"><path d="M8 12H13M13 6V7" stroke="#36c5f0" /><path d="M19 6V12M24 12H25" stroke="#2eb67d" /><path d="M19 18H24M19 23V24" stroke="#ecb22e" /><path d="M8 18V18M13 18V24" stroke="#e01e5a" /></g><circle cx="23" cy="23" r="8" fill="#c9184a" stroke="#7c1430" /><text x="23" y="28" fontSize="13" textAnchor="middle" fill="#fff">1</text></svg>,
  <div className="flex h-7 w-7 items-center justify-center rounded-full bg-[#7134a4]"><FaGithub className="h-6 w-6 text-white" /></div>,
  <svg viewBox="0 0 28 28" className="h-7 w-7"><path d="M10 1L23 4 27 24 21 27 15 22Z" fill="#d8d2c4" /><path d="M8 2L22 4 18 26 1 22Z" fill="#a9d3e4" /><path d="M6 10L20 12 18 26 1 22Z" fill="#4e93b4" /><path d="M6 10L20 12 19 17 4 14Z" fill="#78b3cc" /><path d="M8 2L22 4" stroke="#eee" strokeWidth="2" /></svg>,
  <svg viewBox="0 0 30 24" className="h-6 w-[30px]"><rect x="1" y="1" width="28" height="21" fill="#2c3133" stroke="#b9bcbe" strokeWidth="2" /><text x="4" y="11" fontSize="7" fill="#ccc">C:\_</text></svg>,
  <div className="h-[30px] w-[30px] bg-[#0c0c0c]"><Rhino big /></div>,
];

function Taskbar() {
  return (
    <div className="flex h-[50px] shrink-0 bg-[#1c1c1c] text-white">
      <div className="flex w-[61px] items-center justify-center">
        <svg viewBox="0 0 20 20" className="h-5 w-5" fill="#fff"><path d="M0 3L9 1.700V9.500H0ZM10 1.500L20 0V9.500H10ZM0 10.500H9V18.300L0 17ZM10 10.500H20V20L10 18.500Z" /></svg>
      </div>
      <div className="flex w-[429px] items-center border border-[#565656] bg-[#333] text-[18.500px]">
        <svg className="ml-[13px] h-[26px] w-[26px]" viewBox="0 0 26 26" fill="none" stroke="#eee" strokeWidth="1.700"><circle cx="16" cy="9.500" r="8" /><path d="M10.500 15.500L2 25" /></svg>
        <span className="ml-[15px] pt-px tracking-[-0.4px] text-[#c5c5c5]">Type here to search</span>
      </div>
      <div className="flex w-[60px] items-center justify-center"><span className="h-[20px] w-[20px] rounded-full border-[2.500px] border-white" /></div>
      <div className="flex w-[63px] items-center justify-center">
        <svg viewBox="0 0 22 22" className="h-[22px] w-[22px]" fill="none" stroke="#ddd" strokeWidth="1.500"><path d="M1 1V4H14V1M1 21V18H14V21M2 7.500H13V14.500H2ZM19 1V6M19 12V21" /><path d="M17.500 7.500H20.500V10.500H17.500Z" fill="#fff" /></svg>
      </div>
      {APPS.map((a, i) => (
        <div key={i} className={`flex w-[62px] shrink-0 flex-col items-center ${i === 0 ? "bg-[#4a4d4c] shadow-[inset_-4px_0_0_#383a39]" : ""}`}>
          <div className="flex grow items-center justify-center pt-[2px]">{a}</div>
          <div className={`h-[3px] shrink-0 bg-[#76b9ed] ${i === 0 ? "w-[62px]" : "w-[51px]"}`} />
        </div>
      ))}
      <div className="grow" />
      <svg className="h-[50px] w-[166px]" viewBox="1598 1030 166 50" fill="none" stroke="#eee" strokeWidth="1.400">
        <path d="M1612 1058L1619.500 1050.500 1627 1058" />
        <path d="M1656 1051H1667.500V1061H1656M1669 1054V1058M1650 1050V1054Q1652 1057 1654 1054V1050H1650M1652 1047V1050M1655 1047V1050M1652 1056V1060H1656" />
        <path d="M1656 1053H1663V1059H1655Z" fill="#fff" stroke="none" />
        <path d="M1693.500 1063Q1694 1050 1708 1049M1697.500 1064Q1698 1054 1708 1053M1701.500 1064Q1702 1058 1708 1057" stroke="#aaa" />
        <circle cx="1706.500" cy="1062" r="1.500" fill="#fff" stroke="none" />
        <path d="M1740 1062L1747 1048Q1750 1044 1752 1048L1744 1062 1739 1065ZM1741 1056C1734 1057 1733 1065 1739 1064C1746 1062 1747 1052 1752 1052C1757 1053 1753 1057 1749 1056" />
      </svg>
      <div className="flex w-[94px] flex-col items-center justify-center pt-[2px] text-[14.200px] leading-[23.500px]"><span>9:22 PM</span><span>3/24/2021</span></div>
      <svg className="ml-[8px] h-[50px] w-[48px]" viewBox="1866 1030 48 50"><path d="M1868 1045H1888V1062H1880L1876 1066V1062H1868Z" fill="#fff" /><path d="M1871 1049.500H1885M1871 1053.500H1885M1871 1057.500H1880" stroke="#222" /><circle cx="1887.500" cy="1064" r="10.500" fill="#3a3c3e" stroke="#888" /><text x="1887.500" y="1069" fontSize="13.500" fontWeight="600" fill="#fff" textAnchor="middle">21</text></svg>
      <div className="w-[6px] border-l border-[#666]" />
    </div>
  );
}

export default function App() {
  return (
    <div className={`${FONT} flex h-[1080px] w-[1920px] flex-col overflow-hidden bg-[#e8ecef]`}>
      <svg className="absolute h-0 w-0">
        <defs>
          <radialGradient id="blue" cx=".35" cy=".3"><stop offset="0" stopColor="#cfe0ff" /><stop offset=".5" stopColor="#4f7fe0" /><stop offset="1" stopColor="#1c3fa0" /></radialGradient>
          <radialGradient id="ball" cx=".4" cy=".35"><stop offset="0" stopColor="#fff" /><stop offset="1" stopColor="#c9cbcc" /></radialGradient>
          <linearGradient id="blueq" x1="0" y1="0" x2="1" y2="1"><stop offset="0" stopColor="#5f80dc" /><stop offset=".6" stopColor="#a9c0f7" /><stop offset="1" stopColor="#5878d0" /></linearGradient>
          <linearGradient id="fire" x1="0" y1="1" x2="1" y2="0"><stop offset="0" stopColor="#fbb416" /><stop offset=".5" stopColor="#f08a18" /><stop offset="1" stopColor="#d9481a" /></linearGradient>
        </defs>
      </svg>
      <TitleBar />
      <div className="flex h-[24px] shrink-0 items-center bg-white pt-[2px] pl-[4px] text-[13.600px] leading-[18px] tracking-[-0.05px] text-[#666]">
        {MENU.map(([t, w]) => <span key={t} className={`${w} shrink-0 whitespace-nowrap`}>{t}</span>)}
      </div>
      <CommandArea />
      <Tabs />
      <IconBar />
      <div className="flex h-[797px] shrink-0">
        <div className="flex w-[1520px] shrink-0 flex-col">
          <div className="flex h-[766px] shrink-0">
            <div className="w-[83px] shrink-0">
              <div className="mx-[2px] mt-[2px] mb-[4px] h-px bg-[#d8dcdf]" />
              <div className="grid grid-cols-[35px_35px]">
                {LEFT.map((ic, i) => <svg key={i} viewBox="0 0 105 105" className="h-[35px] w-[35px]">{ic}</svg>)}
              </div>
            </div>
            <div className="grid grow grid-cols-[717px_715px] grid-rows-[381px_380px] gap-[5px]">
              <Viewport title="Top"><OrthoGrid w={717} h={381} cx={358} cy={191} a="y" b="x" /></Viewport>
              <Viewport title="Perspective" active><PerspGrid /></Viewport>
              <Viewport title="Front"><OrthoGrid w={717} h={380} cx={358} cy={190} a="z" b="x" up /></Viewport>
              <Viewport title="Right"><OrthoGrid w={715} h={380} cx={357} cy={190} a="z" b="y" /></Viewport>
            </div>
          </div>
          <div className="h-[3px] shrink-0" />
          <ViewTabs />
        </div>
        <Panel />
      </div>
      <div className="flex h-[28px] shrink-0 items-center pt-[2px] pl-[11px] text-[14px] text-black">
        {OSNAP.map(([t, on, w]) => (
          <div key={t} className={`${w} flex shrink-0 items-center gap-[4px]`}><Check on={on === 1} dim={on === 2} />{t}</div>
        ))}
      </div>
      <div className="flex h-[18px] shrink-0 overflow-hidden border-t border-[#d2d8de] text-[14px] leading-[18px] whitespace-nowrap text-black">
        {STATUS.map(([t, w, on]) => (
          <div key={t} className={`${w} flex shrink-0 items-center border-r border-[#d2d8de] ${t === "Default" ? "gap-[2px] pl-[3px]" : "justify-center"} ${on ? "bg-[#e1f3fa] font-bold tracking-[-0.300px]" : ""}`}>
            {t === "Default" && <span className="h-[13px] w-[13px] bg-black" />}{t}
          </div>
        ))}
        <span className="pl-px">CPU use: 0.2 %</span>
      </div>
      <Taskbar />
    </div>
  );
}
